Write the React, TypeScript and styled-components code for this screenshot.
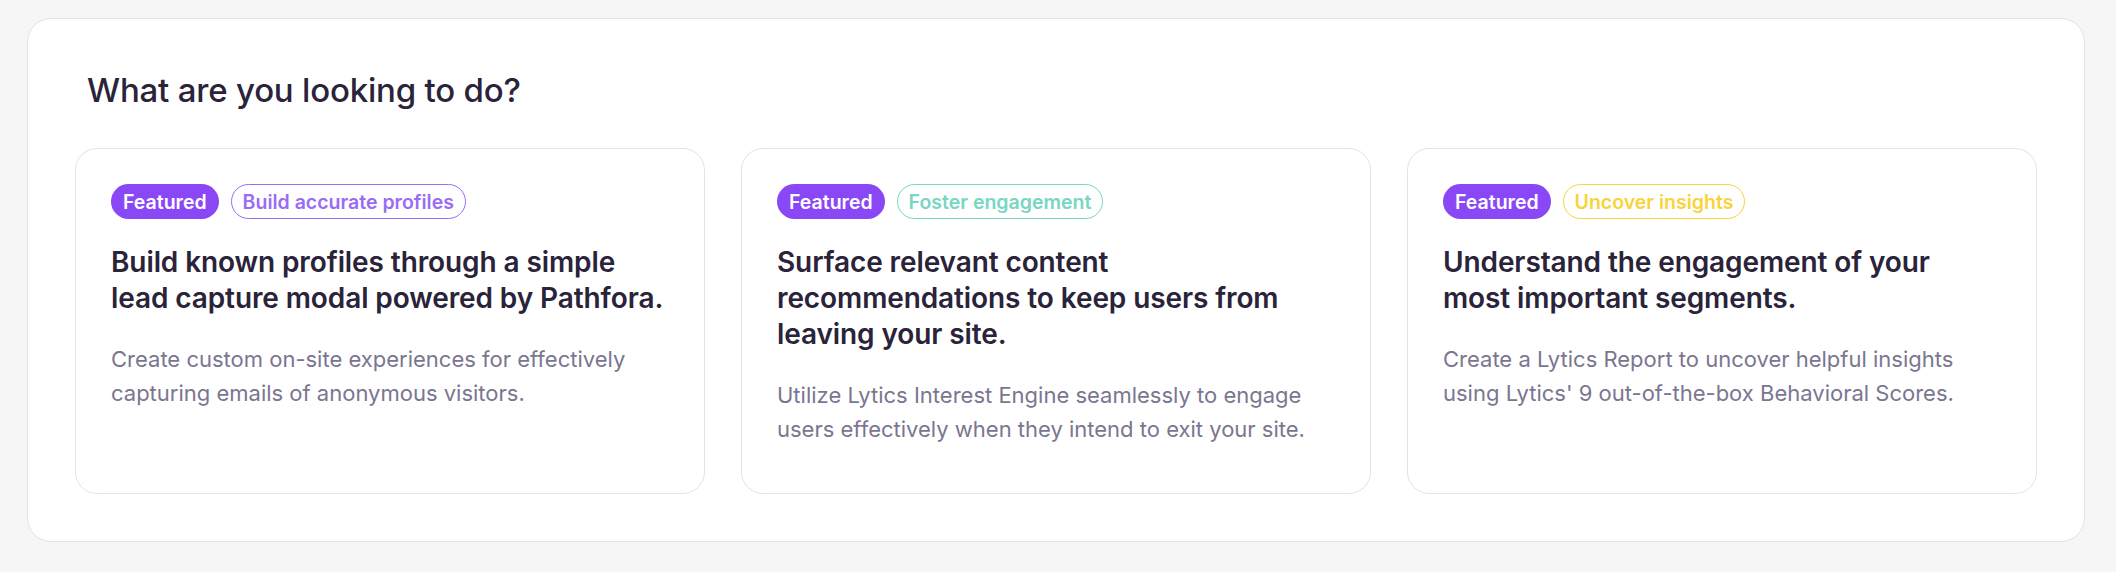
import React from "react";
import styled, { createGlobalStyle } from "styled-components";

const GlobalStyle = createGlobalStyle`
  html, body {
    margin: 0;
    padding: 0;
    background: #f6f6f7;
  }
  body {
    font-family: Inter, "Noto Sans", sans-serif;
    -webkit-font-smoothing: antialiased;
  }
  * { box-sizing: border-box; }
`;

const Page = styled.div`
  padding: 18px 31px 30px 27px;
`;

const Panel = styled.section`
  background: #ffffff;
  border: 1px solid #e3e2e8;
  border-radius: 24px;
  padding: 51px 47px 47px 47px;
`;

const Heading = styled.h2`
  margin: 0 0 38px 12px;
  font-size: 33px;
  line-height: 40px;
  font-weight: 500;
  color: #2a2339;
  letter-spacing: -0.2px;
`;

const CardGrid = styled.div`
  display: grid;
  grid-template-columns: repeat(3, 1fr);
  gap: 36px;
`;

const Card = styled.article`
  border: 1px solid #e3e2e8;
  border-radius: 22px;
  padding: 35px 38px 35px 35px;
  min-height: 346px;
  display: flex;
  flex-direction: column;
`;

const BadgeRow = styled.div`
  display: flex;
  gap: 12px;
  margin-bottom: 25px;
`;

type Tone = "violet" | "teal" | "gold";

const toneColors: Record<Tone, string> = {
  violet: "#9a6cf6",
  teal: "#78d6c3",
  gold: "#f8d33a",
};

const Featured = styled.span`
  display: inline-flex;
  align-items: center;
  height: 35px;
  padding: 0 12px;
  border-radius: 18px;
  background: #8a47f6;
  color: #ffffff;
  font-size: 19.5px;
  font-weight: 600;
`;

const Topic = styled.span<{ $tone: Tone }>`
  display: inline-flex;
  align-items: center;
  height: 35px;
  padding: 0 11px;
  border-radius: 18px;
  border: 1.5px solid ${(p) => toneColors[p.$tone]};
  color: ${(p) => toneColors[p.$tone]};
  font-size: 19.5px;
  font-weight: 600;
`;

const Title = styled.h3`
  margin: 0 0 26px;
  font-size: 28px;
  line-height: 36px;
  font-weight: 600;
  color: #2a2339;
  letter-spacing: -0.1px;
`;

const Description = styled.p`
  margin: 0;
  font-size: 22px;
  line-height: 34px;
  font-weight: 400;
  color: #7a7690;
`;

const items: { tag: string; tone: Tone; title: string; body: string }[] = [
  {
    tag: "Build accurate profiles",
    tone: "violet",
    title: "Build known profiles through a simple lead capture modal powered by Pathfora.",
    body: "Create custom on-site experiences for effectively capturing emails of anonymous visitors.",
  },
  {
    tag: "Foster engagement",
    tone: "teal",
    title: "Surface relevant content recommendations to keep users from leaving your site.",
    body: "Utilize Lytics Interest Engine seamlessly to engage users effectively when they intend to exit your site.",
  },
  {
    tag: "Uncover insights",
    tone: "gold",
    title: "Understand the engagement of your most important segments.",
    body: "Create a Lytics Report to uncover helpful insights using Lytics' 9 out-of-the-box Behavioral Scores.",
  },
];

export default function App() {
  return (
    <>
      <GlobalStyle />
      <Page>
        <Panel>
          <Heading>What are you looking to do?</Heading>
          <CardGrid>
            {items.map((item) => (
              <Card key={item.tag}>
                <BadgeRow>
                  <Featured>Featured</Featured>
                  <Topic $tone={item.tone}>{item.tag}</Topic>
                </BadgeRow>
                <Title>{item.title}</Title>
                <Description>{item.body}</Description>
              </Card>
            ))}
          </CardGrid>
        </Panel>
      </Page>
    </>
  );
}
